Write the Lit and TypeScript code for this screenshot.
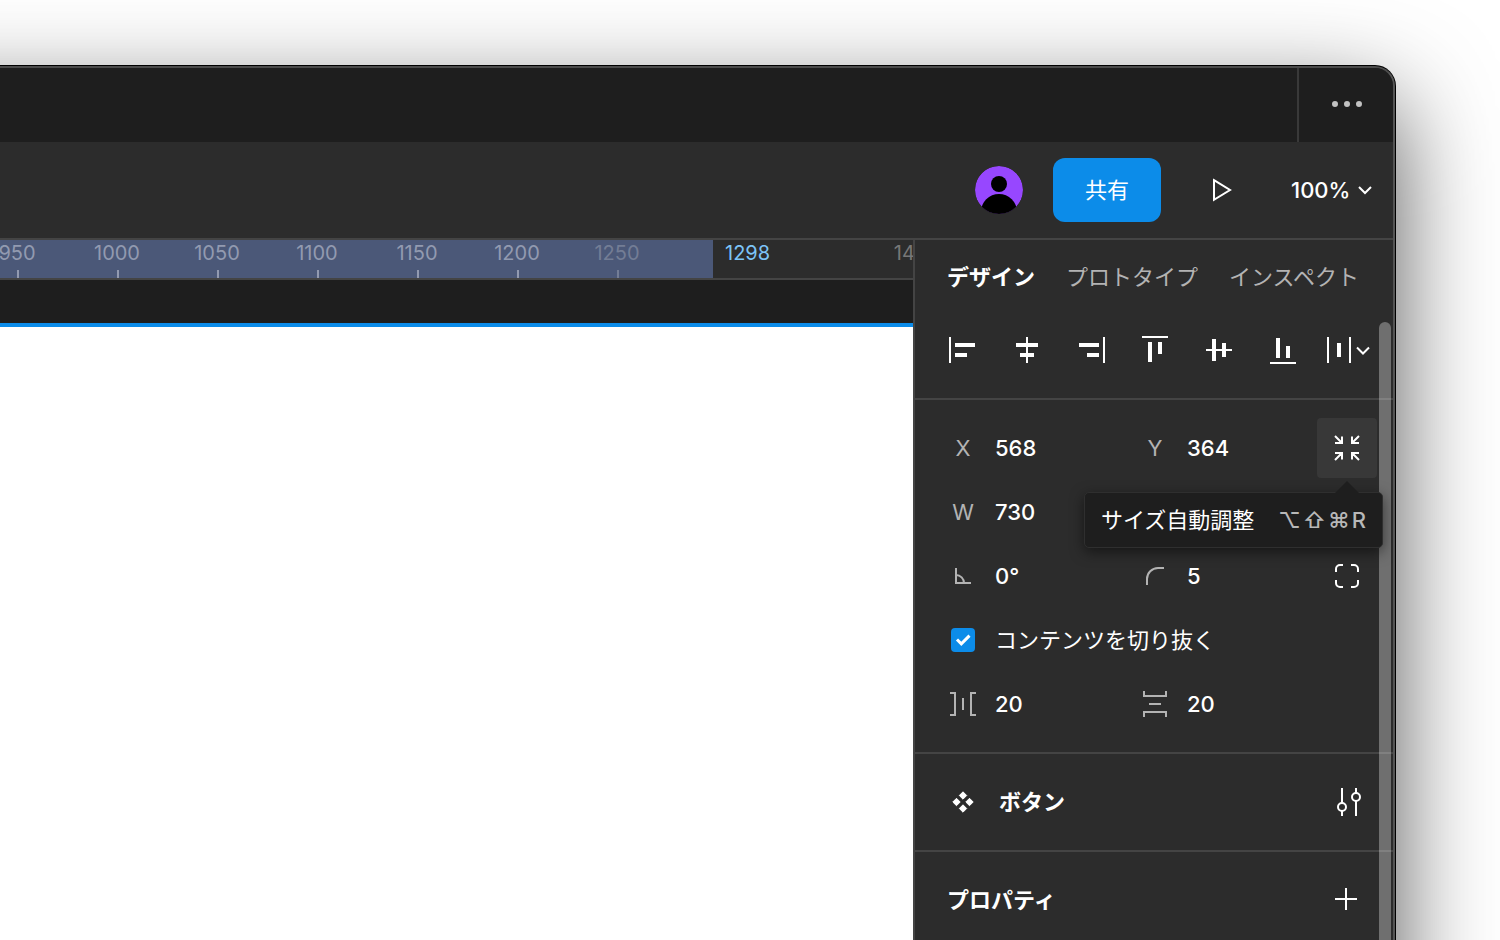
import { LitElement, html, css, svg } from "lit";
import type { SVGTemplateResult, TemplateResult } from "lit";
import { customElement, property } from "lit/decorators.js";

const icons: Record<string, SVGTemplateResult> = {
  alignLeft: svg`<path class="fill" d="M2 3h2v26h-2zM8 9h20v4h-20zM8 19h12v4h-12z"/>`,
  alignCenter: svg`<path class="fill" d="M15 3h2v26h-2zM5 9h22v4h-22zM9 19h14v4h-14z"/>`,
  alignRight: svg`<path class="fill" d="M28 3h2v26h-2zM4 9h20v4h-20zM12 19h12v4h-12z"/>`,
  alignTop: svg`<path class="fill" d="M3 2h26v2h-26zM9 8h4v20h-4zM19 8h4v12h-4z"/>`,
  alignMiddle: svg`<path class="fill" d="M3 15h26v2h-26zM9 5h4v22h-4zM19 9h4v14h-4z"/>`,
  alignBottom: svg`<path class="fill" d="M3 28h26v2h-26zM9 4h4v20h-4zM19 12h4v12h-4z"/>`,
  distribute: svg`<path class="fill" d="M4 3h2v26h-2zM26 3h2v26h-2zM14 9h4v14h-4z"/><path d="M34 13.5l6 6 6-6"/>`,
  shrink: svg`<path d="M4 4l7 7M11 4.5V11H4M28 4l-7 7M21 4.5V11H28M4 28l7-7M11 27.5V21H4M28 28l-7-7M21 27.5V21H28"/>`,
  angle: svg`<path d="M9 8V23H24M9 15a8 8 0 0 1 8 8"/>`,
  radius: svg`<path d="M8 25V19A11 11 0 0 1 19 8H25"/>`,
  corners: svg`<path d="M5 12V9a4 4 0 0 1 4-4h3M20 5h3a4 4 0 0 1 4 4v3M27 20v3a4 4 0 0 1-4 4h-3M12 27H9a4 4 0 0 1-4-4v-3"/>`,
  gapX: svg`<path d="M3 5H8V27H3M29 5H24V27H29M16 10V22"/>`,
  gapY: svg`<path d="M5 3V8H27V3M5 29V24H27V29M10 16H22"/>`,
  component: svg`<path class="fill round" d="M16 5.8l3.7 3.7-3.7 3.7-3.7-3.7zM9.5 12.3l3.7 3.7-3.7 3.7L5.8 16zM22.5 12.3L26.2 16l-3.7 3.7-3.7-3.7zM16 18.8l3.7 3.7L16 26.2l-3.7-3.7z"/>`,
  sliders: svg`<path d="M11 2V17M11 25V30M25 2V7M25 15V30"/><circle cx="11" cy="21" r="4"/><circle cx="25" cy="11" r="4"/>`,
  plus: svg`<path d="M4 15H26M15 4V26"/>`,
  more: svg`<path class="fill" d="M1 16a3 3 0 1 0 6 0a3 3 0 1 0-6 0M13 16a3 3 0 1 0 6 0a3 3 0 1 0-6 0M25 16a3 3 0 1 0 6 0a3 3 0 1 0-6 0"/>`,
  play: svg`<path d="M9 6.2L25 16 9 25.8z"/>`,
};

const iconStyles = css`
  svg {
    display: block;
    flex: none;
    fill: none;
    stroke: currentColor;
    stroke-width: 2;
  }
  .fill {
    fill: currentColor;
    stroke: none;
  }
  .round {
    stroke: currentColor;
    stroke-width: 1;
    stroke-linejoin: round;
  }
`;

const controlStyles = css`
  :host,
  * {
    box-sizing: border-box;
  }
  button,
  input,
  select {
    margin: 0;
    padding: 0;
    border: 0;
    background: none;
    color: inherit;
    font: inherit;
    appearance: none;
  }
`;

function icon(name: string, width = 32): TemplateResult {
  return html`<svg width=${width} height="32" viewBox="0 0 ${width} 32" aria-hidden="true">${icons[name]}</svg>`;
}

@customElement("title-bar")
export class TitleBar extends LitElement {
  static styles = [
    iconStyles,
    controlStyles,
    css`
      :host {
        display: flex;
        justify-content: flex-end;
        height: 74px;
        background: #1e1e1e;
      }
      .more {
        display: flex;
        align-items: center;
        justify-content: center;
        width: 96px;
        padding: 0 0 2px 2px;
        border-left: 2px solid #393939;
        color: #c2c2c2;
      }
    `,
  ];
  render() {
    return html`<button class="more" aria-haspopup="menu">${icon("more")}</button>`;
  }
}

@customElement("tool-bar")
export class ToolBar extends LitElement {
  static styles = [
    iconStyles,
    controlStyles,
    css`
      :host {
        display: flex;
        align-items: center;
        justify-content: flex-end;
        height: 98px;
        padding-right: 20px;
        border-bottom: 2px solid #444;
      }
      .share {
        width: 108px;
        height: 64px;
        margin: 0 44px 0 30px;
        border-radius: 12px;
        background: #0c8ce9;
      }
      .zoom {
        display: flex;
        align-items: center;
        gap: 8px;
        margin-left: 54px;
      }
      .zoom select {
        width: 58px;
        height: 32px;
        font-weight: 500;
      }
    `,
  ];
  render() {
    return html`
      <svg width="48" height="48" viewBox="0 0 48 48" aria-hidden="true">
        <clipPath id="disc"><circle cx="24" cy="24" r="24" /></clipPath>
        <g clip-path="url(#disc)" stroke="none">
          <circle cx="24" cy="24" r="24" fill="#9747ff" />
          <circle cx="24" cy="18" r="8" fill="#000" />
          <circle cx="24" cy="46" r="18" fill="#000" />
        </g>
      </svg>
      <button class="share">共有</button>
      <button>${icon("play")}</button>
      <label class="zoom">
        <select><option>100%</option></select>
        <svg width="16" height="16" viewBox="0 0 16 16"><path d="M2 5l6 6 6-6" /></svg>
      </label>
    `;
  }
}

@customElement("canvas-ruler")
export class CanvasRuler extends LitElement {
  static styles = css`
    :host {
      display: flex;
      flex: none;
      box-sizing: border-box;
      height: 40px;
      overflow: hidden;
      border-bottom: 2px solid #444;
      background: #2c2c2c;
      color: #777;
      font-size: 20px;
      line-height: 26px;
    }
    .selection {
      display: flex;
      flex: none;
      padding: 0 45px 0 168px;
      background: #4b5878;
      color: #929ab0;
    }
    .mark {
      display: flex;
      flex: none;
      flex-direction: column;
      align-items: center;
      justify-content: space-between;
      width: 100px;
    }
    .mark span {
      padding-right: 2px;
    }
    .mark::after {
      content: "";
      width: 2px;
      height: 8px;
      background: currentColor;
    }
    .mark.faded {
      color: #737d95;
    }
    .edge {
      flex: none;
      width: 143px;
      margin-left: 12px;
      color: #7cc4f8;
    }
  `;
  render() {
    const marks = [950, 1000, 1050, 1100, 1150, 1200, 1250];
    return html`
      <div class="selection">
        ${marks.map((m) => html`<div class="mark ${m === 1250 ? "faded" : ""}"><span>${m}</span></div>`)}
      </div>
      <div class="edge">1298</div>
      <div class="mark"><span>1400</span></div>
    `;
  }
}

@customElement("number-field")
export class NumberField extends LitElement {
  @property() glyph = "";
  @property() letter = "";
  @property() value = "";

  static styles = [
    iconStyles,
    controlStyles,
    css`
      :host {
        display: block;
      }
      .field {
        display: grid;
        grid-template-columns: 64px 1fr;
        align-items: center;
        height: 64px;
      }
      .lead {
        display: flex;
        justify-content: center;
        color: #b3b3b3;
      }
      input {
        width: 100%;
        height: 32px;
        font-weight: 500;
      }
    `,
  ];
  render() {
    return html`
      <label class="field">
        <span class="lead">${this.glyph ? icon(this.glyph) : this.letter}</span>
        <input .value=${this.value} />
      </label>
    `;
  }
}

@customElement("tool-tip")
export class ToolTip extends LitElement {
  static styles = css`
    :host {
      display: flex;
      gap: 24px;
      box-sizing: border-box;
      height: 56px;
      padding: 11px 16px;
      border: 1px solid #2f2f2f;
      border-radius: 5px;
      background: #1e1e1e;
      box-shadow: 0 4px 14px rgba(0, 0, 0, 0.5);
      white-space: nowrap;
    }
    .arrow {
      position: absolute;
      top: -12px;
      right: 22px;
      width: 26px;
      height: 13px;
      background: #1e1e1e;
      clip-path: polygon(50% 0, 100% 100%, 0 100%);
    }
    .keys {
      display: flex;
      gap: 2px;
      color: #b8b8b8;
      font-weight: 500;
    }
    kbd {
      font: inherit;
    }
  `;
  render() {
    return html`
      <span class="arrow"></span>
      <span>サイズ自動調整</span>
      <span class="keys"><kbd>⌥</kbd><kbd>⇧</kbd><kbd>⌘</kbd><kbd>R</kbd></span>
    `;
  }
}

@customElement("design-panel")
export class DesignPanel extends LitElement {
  static styles = [
    iconStyles,
    controlStyles,
    css`
      :host {
        position: relative;
        display: block;
        border-left: 2px solid #444;
        background: #2c2c2c;
      }
      .tabs {
        display: flex;
        align-items: center;
        gap: 31px;
        height: 76px;
        padding: 0 0 2px 32px;
        color: #b3b3b3;
        white-space: nowrap;
      }
      .active {
        color: #fff;
        font-weight: 700;
      }
      .section {
        padding: 16px;
        border-bottom: 2px solid #444;
      }
      .align {
        display: grid;
        grid-template-columns: repeat(7, 64px);
        padding: 0 16px 14px;
      }
      .align button {
        display: grid;
        place-items: center;
        height: 68px;
      }
      .row {
        display: grid;
        grid-template-columns: 192px 192px 64px;
        align-items: center;
        height: 64px;
      }
      .action {
        position: relative;
        justify-self: center;
      }
      .square {
        display: grid;
        place-items: center;
        width: 60px;
        height: 60px;
        border-radius: 4px;
      }
      .hover {
        background: #383838;
      }
      tool-tip {
        position: absolute;
        z-index: 2;
        top: 74px;
        right: -6px;
      }
      .clip {
        display: flex;
        align-items: center;
        gap: 20px;
        height: 64px;
        padding-left: 20px;
      }
      .box {
        display: grid;
      }
      .box > * {
        grid-area: 1 / 1;
      }
      .box input {
        width: 24px;
        height: 24px;
        border-radius: 4px;
        background: #0c8ce9;
      }
      .box svg {
        stroke-width: 3;
        pointer-events: none;
      }
      .heading {
        display: flex;
        align-items: center;
        height: 64px;
      }
      h2 {
        flex: 1;
        margin: 0 0 0 16px;
        font-size: 22px;
        font-weight: 700;
      }
      .heading .lead {
        margin-left: 16px;
      }
      .heading .lead + h2 {
        margin-left: 20px;
      }
      .scrollbar {
        position: absolute;
        top: 82px;
        right: 2px;
        bottom: 0;
        width: 12px;
        border-radius: 6px 6px 0 0;
        background: rgba(255, 255, 255, 0.32);
      }
    `,
  ];
  render() {
    const alignments = ["alignLeft", "alignCenter", "alignRight", "alignTop", "alignMiddle", "alignBottom"];
    return html`
      <nav class="tabs">
        <button class="active">デザイン</button>
        <button>プロトタイプ</button>
        <button>インスペクト</button>
      </nav>
      <div class="section align">
        ${alignments.map((name) => html`<button>${icon(name)}</button>`)}
        <button>${icon("distribute", 48)}</button>
      </div>
      <div class="section">
        <div class="row">
          <number-field letter="X" value="568"></number-field>
          <number-field letter="Y" value="364"></number-field>
          <div class="action">
            <button class="square hover">${icon("shrink")}</button>
            <tool-tip role="tooltip"></tool-tip>
          </div>
        </div>
        <div class="row"><number-field letter="W" value="730"></number-field></div>
        <div class="row">
          <number-field glyph="angle" value="0°"></number-field>
          <number-field glyph="radius" value="5"></number-field>
          <div class="action"><button class="square">${icon("corners")}</button></div>
        </div>
        <label class="clip">
          <span class="box">
            <input type="checkbox" checked />
            <svg width="24" height="24" viewBox="0 0 24 24"><path d="M6 11.5l4.3 4.3 8.2-8.2" /></svg>
          </span>
          コンテンツを切り抜く
        </label>
        <div class="row">
          <number-field glyph="gapX" value="20"></number-field>
          <number-field glyph="gapY" value="20"></number-field>
        </div>
      </div>
      <div class="section">
        <div class="heading">
          <span class="lead">${icon("component")}</span>
          <h2>ボタン</h2>
          <button class="square">${icon("sliders")}</button>
        </div>
      </div>
      <div class="section">
        <div class="heading">
          <h2>プロパティ</h2>
          <button class="square">${icon("plus")}</button>
        </div>
      </div>
      <div class="scrollbar"></div>
    `;
  }
}

@customElement("app-root")
export class AppRoot extends LitElement {
  static styles = css`
    :host {
      display: grid;
      box-sizing: border-box;
      height: 100vh;
      overflow: hidden;
      padding: 66px 105px 0 0;
      background: #fff;
      color: #fff;
      font: 400 22px/32px Inter, "Noto Sans CJK JP", sans-serif;
    }
    .window {
      display: flex;
      flex-direction: column;
      box-sizing: border-box;
      height: calc(100vh + 100px);
      margin-left: -200px;
      overflow: hidden;
      border: 2px solid #4b4b4b;
      border-right-color: #555;
      border-left: 0;
      border-radius: 20px;
      background: #2c2c2c;
      box-shadow: 0 0 0 1px #000, 0 36px 100px rgba(0, 0, 0, 0.68);
    }
    .body {
      display: grid;
      flex: 1;
      grid-template-columns: minmax(0, 1fr) 480px;
      min-height: 0;
    }
    .canvas {
      display: flex;
      flex-direction: column;
      min-height: 0;
      overflow: hidden;
      background: #1e1e1e;
    }
    .frame {
      flex: 1;
      margin-top: 43px;
      border-top: 4px solid #0c8ce9;
      background: #fff;
    }
  `;
  render() {
    return html`
      <div class="window">
        <title-bar></title-bar>
        <tool-bar></tool-bar>
        <div class="body">
          <main class="canvas">
            <canvas-ruler></canvas-ruler>
            <div class="frame"></div>
          </main>
          <design-panel></design-panel>
        </div>
      </div>
    `;
  }
}
